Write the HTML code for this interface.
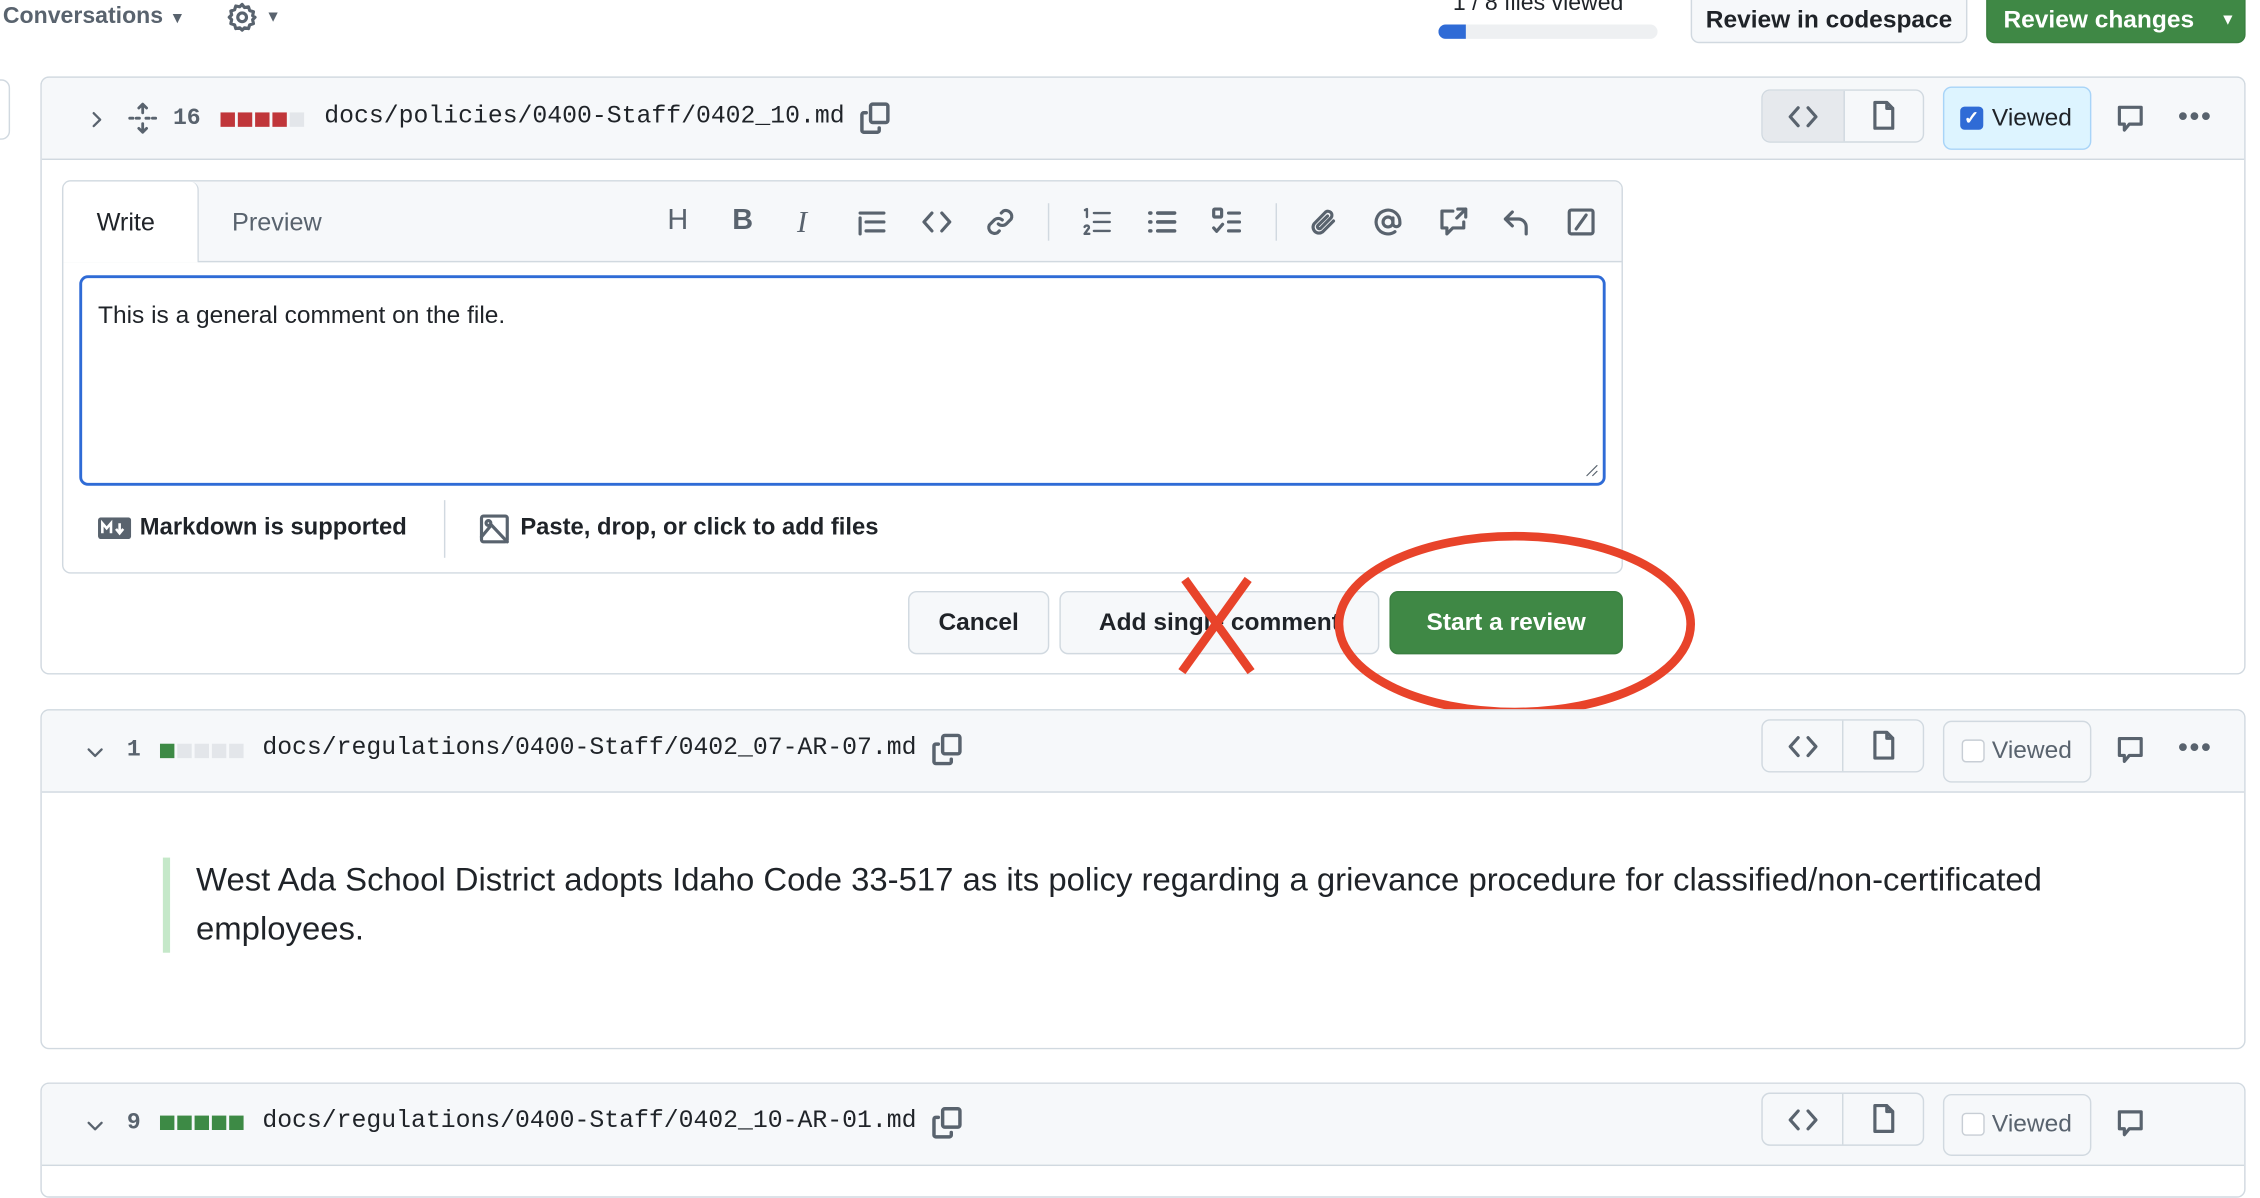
<!DOCTYPE html>
<html><head><meta charset="utf-8">
<style>
html,body{margin:0;padding:0;background:#fff;width:2260px;height:1120px;overflow:hidden}
#s{position:absolute;left:0;top:0;width:1568px;height:777px;transform:scale(1.44133);transform-origin:0 0;font-family:"Liberation Sans",sans-serif;color:#1f2328}
.a{position:absolute}
.mono{font-family:"Liberation Mono",monospace}
.btn{position:absolute;border:1px solid #d1d9e0;border-radius:6px;background:#f6f8fa;box-sizing:border-box;display:flex;align-items:center;justify-content:center;font-size:17px;font-weight:600;color:#1f2328}
.g{background:#3f8845;border-color:#3a7f40;color:#fff}
.box{position:absolute;left:28px;width:1530px;border:1px solid #d1d9e0;border-radius:6px;box-sizing:border-box;background:#fff;overflow:hidden}
.hdr{position:absolute;left:0;top:0;right:0;height:56px;background:#f6f8fa;border-bottom:1px solid #d1d9e0}
svg.i{position:absolute;fill:none;stroke:#59636e;stroke-width:1.6;stroke-linecap:round;stroke-linejoin:round}
.sq{position:absolute;width:10px;height:10px}
</style></head><body><div id="s">

<div class="a" style="left:2px;top:3px;font-size:16px;font-weight:600;color:#59636e">Conversations <span style="font-size:11px">▼</span></div>
<svg class="i" style="left:157px;top:1px" width="22" height="22" viewBox="0 0 16 16"><circle cx="8" cy="8" r="2.2"/><path d="M8 1.5l1.2 1.6 2-.4.6 1.9 1.9.6-.4 2L14.5 8l-1.2 1.2.4 2-1.9.6-.6 1.9-2-.4L8 14.5l-1.2-1.2-2 .4-.6-1.9-1.9-.6.4-2L1.5 8l1.2-1.2-.4-2 1.9-.6.6-1.9 2 .4z"/></svg>
<div class="a" style="left:184px;top:6px;font-size:11px;color:#59636e">▼</div>
<div class="a" style="left:1008px;top:-6px;font-size:16px;color:#1f2328">1 / 8 files viewed</div>
<div class="a" style="left:998px;top:17px;width:152px;height:10px;border-radius:5px;background:#eef0f2;overflow:hidden"><div style="width:19px;height:10px;background:#2f6bd6"></div></div>
<div class="btn" style="left:1173px;top:-8px;width:192px;height:38px;padding-top:6px">Review in codespace</div>
<div class="btn g" style="left:1378px;top:-8px;width:180px;height:38px;padding-top:6px;justify-content:flex-start;padding-left:11px">Review changes<span style="font-size:11px;margin-left:18px">▼</span></div>
<div class="a" style="left:-20px;top:55px;width:25px;height:40px;border:1px solid #d1d9e0;border-radius:6px"></div>

<div class="box" style="top:53px;height:415px">
 <div class="hdr">
  <svg class="i" style="left:30px;top:21px" width="16" height="16" viewBox="0 0 16 16"><path d="M6 3.5L10.5 8 6 12.5"/></svg>
  <svg class="i" style="left:58px;top:16px" width="24" height="24" viewBox="0 0 16 16"><path d="M8 1.5v4M6.2 3.3L8 1.5l1.8 1.8M8 14.5v-4M6.2 12.7L8 14.5l1.8-1.8M2 8h1.5M5 8h1.5M9.5 8H11M12.5 8H14" stroke-width="1.3"/></svg>
  <div class="a mono" style="left:91px;top:19px;font-size:16px;font-weight:700;color:#59636e">16</div>
  <div class="sq" style="left:124px;top:24px;background:#c0363a"></div><div class="sq" style="left:136px;top:24px;background:#c0363a"></div><div class="sq" style="left:148px;top:24px;background:#c0363a"></div><div class="sq" style="left:160px;top:24px;background:#c0363a"></div><div class="sq" style="left:172px;top:24px;background:#e3e6ea"></div>
  <div class="a mono" style="left:196px;top:18px;font-size:17.2px;color:#1f2328">docs/policies/0400-Staff/0402_10.md</div>
  <svg class="i" style="left:566px;top:16px" width="24" height="24" viewBox="0 0 16 16"><rect x="6" y="1.5" width="8" height="8.5" rx="1"/><path d="M4 5.5H2.8a.8.8 0 00-.8.8v7.4c0 .4.4.8.8.8h6.4c.4 0 .8-.4.8-.8V12.5"/></svg>
  <div class="a" style="left:1193px;top:8px;width:113px;height:37px;border:1px solid #d1d9e0;border-radius:6px;box-sizing:border-box;overflow:hidden;background:#f6f8fa"><div style="position:absolute;left:0;top:0;width:56px;height:37px;background:#e6e9ed;border-right:1px solid #d1d9e0"></div></div>
  <svg class="i" style="left:1211px;top:16px" width="22" height="22" viewBox="0 0 16 16"><path d="M5.5 3.5L1.5 8l4 4.5M10.5 3.5l4 4.5-4 4.5"/></svg>
  <svg class="i" style="left:1267px;top:14px" width="22" height="24" viewBox="0 0 16 16"><path d="M3.5 1.5h6l3 3v10h-9z M9.5 1.5v3h3"/></svg>
  <div class="a" style="left:1319px;top:6px;width:103px;height:44px;border:1px solid #a8d4f8;border-radius:6px;box-sizing:border-box;background:#ddf4ff"></div>
  <div class="a" style="left:1331px;top:20px;width:16px;height:16px;border-radius:3px;background:#2f6bd6;color:#fff;font-size:13px;line-height:16px;text-align:center;font-weight:700">✓</div>
  <div class="a" style="left:1353px;top:18px;font-size:17px;color:#1f2328">Viewed</div>
  <svg class="i" style="left:1438px;top:17px" width="22" height="22" viewBox="0 0 16 16"><path d="M2.5 2.5h11v8.5H7.5L5 14v-3H2.5z"/></svg>
  <div class="a" style="left:1482px;top:16px;font-size:20px;color:#59636e;letter-spacing:1px">•••</div>
 </div>

 <div class="a" style="left:14px;top:71px;width:1083px;height:273px;border:1px solid #d1d9e0;border-radius:6px;box-sizing:border-box;overflow:hidden">
  <div class="a" style="left:0;top:0;right:0;height:55px;background:#f6f8fa;border-bottom:1px solid #d1d9e0"></div>
  <div class="a" style="left:0;top:0;width:93px;height:56px;background:#fff;border-right:1px solid #d1d9e0;border-top-right-radius:6px"></div>
  <div class="a" style="left:23px;top:18px;font-size:17.5px;color:#1f2328">Write</div>
  <div class="a" style="left:117px;top:18px;font-size:17.5px;color:#59636e">Preview</div>
  <div class="a" style="left:11px;top:65px;width:1059px;height:146px;border:2px solid #2f6bd6;border-radius:6px;box-sizing:border-box"></div>
  <div class="a" style="left:24px;top:83px;font-size:17px;color:#1f2328">This is a general comment on the file.</div>
  <svg class="i" style="left:1055px;top:195px" width="10" height="10" viewBox="0 0 10 10"><path d="M2 9l7-7M6 9l3-3" stroke-width="0.8"/></svg>
  <svg class="a" style="left:24px;top:233px" width="23" height="15" viewBox="0 0 23 15"><rect width="23" height="15" rx="2" fill="#59636e"/><path d="M3 11V4l3 3.5L9 4v7M15 4v6M12.5 8l2.5 3 2.5-3" stroke="#fff" stroke-width="1.8" fill="none"/></svg>
  <div class="a" style="left:53px;top:231px;font-size:16.5px;font-weight:600;color:#1f2328">Markdown is supported</div>
  <div class="a" style="left:264px;top:221px;width:1px;height:40px;background:#d1d9e0"></div>
  <svg class="i" style="left:288px;top:230px" width="22" height="22" viewBox="0 0 16 16"><rect x="1.5" y="1.5" width="13" height="13" rx="1"/><circle cx="5" cy="5" r="1.2"/><path d="M1.5 12l5-6 8 8.5"/></svg>
  <div class="a" style="left:317px;top:231px;font-size:16.5px;font-weight:600;color:#1f2328">Paste, drop, or click to add files</div>
 </div>
 <div class="a" style="left:434px;top:88px;font-size:20px;color:#59636e">H</div>
 <div class="a" style="left:479px;top:88px;font-size:20px;font-weight:700;color:#59636e">B</div>
 <div class="a" style="left:524px;top:88px;font-size:21px;font-style:italic;color:#59636e;font-family:'Liberation Serif',serif">I</div>
 <svg class="i" style="left:565px;top:89px" width="22" height="22" viewBox="0 0 16 16"><path d="M2 3.5h12M2 6v8M5 8h9M5 12.5h9"/></svg>
 <svg class="i" style="left:610px;top:89px" width="22" height="22" viewBox="0 0 16 16"><path d="M5.5 3.5L1.5 8l4 4.5M10.5 3.5l4 4.5-4 4.5"/></svg>
 <svg class="i" style="left:654px;top:89px" width="22" height="22" viewBox="0 0 16 16"><path d="M7 9a3 3 0 004 0l2.5-2.5a3 3 0 00-4-4L8.5 3.5M9 7a3 3 0 00-4 0L2.5 9.5a3 3 0 004 4l1-1"/></svg>
 <div class="a" style="left:698px;top:87px;width:1px;height:26px;background:#d1d9e0"></div>
 <svg class="i" style="left:721px;top:89px" width="22" height="22" viewBox="0 0 16 16"><path d="M6.5 3.5h8M6.5 8h8M6.5 12.5h8M2 2l1-.5v4M1.8 10.5c.5-1 2.4-1 2.2.5L1.8 14h2.4" stroke-width="1.2"/></svg>
 <svg class="i" style="left:766px;top:89px" width="22" height="22" viewBox="0 0 16 16"><path d="M6 3.5h8.5M6 8h8.5M6 12.5h8.5M2 3.5h.5M2 8h.5M2 12.5h.5" stroke-width="1.8"/></svg>
 <svg class="i" style="left:811px;top:89px" width="22" height="22" viewBox="0 0 16 16"><rect x="1.5" y="1.5" width="4" height="4" rx=".5"/><path d="M9 3.5h5.5M9 8h5.5M9 12.5h5.5M1.5 11l1.5 1.7 3-3.5"/></svg>
 <div class="a" style="left:856px;top:87px;width:1px;height:26px;background:#d1d9e0"></div>
 <svg class="i" style="left:879px;top:89px" width="22" height="22" viewBox="0 0 16 16"><path d="M12.5 7.5L7 13a3 3 0 01-4.2-4.2L8.5 3a2 2 0 012.8 2.8L6 11.2a1 1 0 01-1.4-1.4L9.5 5"/></svg>
 <svg class="i" style="left:923px;top:89px" width="22" height="22" viewBox="0 0 16 16"><circle cx="8" cy="8" r="2.5"/><path d="M10.5 6v3a1.8 1.8 0 003.5 0V8a6 6 0 10-2.5 4.9"/></svg>
 <svg class="i" style="left:968px;top:89px" width="22" height="22" viewBox="0 0 16 16"><path d="M8 2.5H2.5v8.5H5v3l3-3h5.5V8M10.5 1.5h4v4M14.5 1.5L10 6"/></svg>
 <svg class="i" style="left:1012px;top:89px" width="22" height="22" viewBox="0 0 16 16"><path d="M6 3L2.5 6.5 6 10M2.5 6.5h6.5a4 4 0 014 4V14"/></svg>
 <svg class="i" style="left:1057px;top:89px" width="22" height="22" viewBox="0 0 16 16"><rect x="2" y="2" width="12" height="12" rx="1"/><path d="M10.5 4.5l-5 7"/></svg>

 <div class="btn" style="left:601px;top:356px;width:98px;height:44px">Cancel</div>
 <div class="btn" style="left:706px;top:356px;width:222px;height:44px">Add single comment</div>
 <div class="btn g" style="left:935px;top:356px;width:162px;height:44px">Start a review</div>
</div>

<svg class="a" style="left:0;top:0" width="1568" height="777">
 <path d="M822 402L868 466M866 402L820 466" stroke="#e8432a" stroke-width="6" fill="none"/>
 <ellipse cx="1051" cy="433" rx="122" ry="61" stroke="#e8432a" stroke-width="6" fill="none"/>
</svg>

<div class="box" style="top:492px;height:236px">
 <div class="hdr">
  <svg class="i" style="left:29px;top:21px" width="16" height="16" viewBox="0 0 16 16"><path d="M3.5 6L8 10.5 12.5 6"/></svg>
  <div class="a mono" style="left:59px;top:18px;font-size:16px;font-weight:700;color:#59636e">1</div>
  <div class="sq" style="left:82px;top:23px;background:#3d8a45"></div><div class="sq" style="left:94px;top:23px;background:#e3e6ea"></div><div class="sq" style="left:106px;top:23px;background:#e3e6ea"></div><div class="sq" style="left:118px;top:23px;background:#e3e6ea"></div><div class="sq" style="left:130px;top:23px;background:#e3e6ea"></div>
  <div class="a mono" style="left:153px;top:17px;font-size:17.2px;color:#1f2328">docs/regulations/0400-Staff/0402_07-AR-07.md</div>
  <svg class="i" style="left:616px;top:15px" width="24" height="24" viewBox="0 0 16 16"><rect x="6" y="1.5" width="8" height="8.5" rx="1"/><path d="M4 5.5H2.8a.8.8 0 00-.8.8v7.4c0 .4.4.8.8.8h6.4c.4 0 .8-.4.8-.8V12.5"/></svg>
  <div class="a" style="left:1193px;top:6px;width:113px;height:37px;border:1px solid #d1d9e0;border-radius:6px;box-sizing:border-box;background:#f6f8fa"><div style="position:absolute;left:55px;top:0;width:1px;height:35px;background:#d1d9e0"></div></div>
  <svg class="i" style="left:1211px;top:14px" width="22" height="22" viewBox="0 0 16 16"><path d="M5.5 3.5L1.5 8l4 4.5M10.5 3.5l4 4.5-4 4.5"/></svg>
  <svg class="i" style="left:1267px;top:12px" width="22" height="24" viewBox="0 0 16 16"><path d="M3.5 1.5h6l3 3v10h-9z M9.5 1.5v3h3"/></svg>
  <div class="a" style="left:1319px;top:7px;width:103px;height:43px;border:1px solid #d1d9e0;border-radius:6px;box-sizing:border-box;background:#f6f8fa"></div>
  <div class="a" style="left:1332px;top:20px;width:14px;height:14px;border-radius:3px;border:1px solid #c8ced5;background:#fff"></div>
  <div class="a" style="left:1353px;top:18px;font-size:17px;color:#59636e">Viewed</div>
  <svg class="i" style="left:1438px;top:16px" width="22" height="22" viewBox="0 0 16 16"><path d="M2.5 2.5h11v8.5H7.5L5 14v-3H2.5z"/></svg>
  <div class="a" style="left:1482px;top:15px;font-size:20px;color:#59636e;letter-spacing:1px">•••</div>
 </div>
 <div class="a" style="left:84px;top:102px;width:5px;height:66px;background:#c5e8c9"></div>
 <div class="a" style="left:107px;top:100px;font-size:22.8px;line-height:34px;color:#1f2328;width:1300px">West Ada School District adopts Idaho Code 33-517 as its policy regarding a grievance procedure for classified/non-certificated employees.</div>
</div>

<div class="box" style="top:751px;height:80px">
 <div class="hdr">
  <svg class="i" style="left:29px;top:21px" width="16" height="16" viewBox="0 0 16 16"><path d="M3.5 6L8 10.5 12.5 6"/></svg>
  <div class="a mono" style="left:59px;top:18px;font-size:16px;font-weight:700;color:#59636e">9</div>
  <div class="sq" style="left:82px;top:22px;background:#3d8a45"></div><div class="sq" style="left:94px;top:22px;background:#3d8a45"></div><div class="sq" style="left:106px;top:22px;background:#3d8a45"></div><div class="sq" style="left:118px;top:22px;background:#3d8a45"></div><div class="sq" style="left:130px;top:22px;background:#3d8a45"></div>
  <div class="a mono" style="left:153px;top:17px;font-size:17.2px;color:#1f2328">docs/regulations/0400-Staff/0402_10-AR-01.md</div>
  <svg class="i" style="left:616px;top:15px" width="24" height="24" viewBox="0 0 16 16"><rect x="6" y="1.5" width="8" height="8.5" rx="1"/><path d="M4 5.5H2.8a.8.8 0 00-.8.8v7.4c0 .4.4.8.8.8h6.4c.4 0 .8-.4.8-.8V12.5"/></svg>
  <div class="a" style="left:1193px;top:6px;width:113px;height:37px;border:1px solid #d1d9e0;border-radius:6px;box-sizing:border-box;background:#f6f8fa"><div style="position:absolute;left:55px;top:0;width:1px;height:35px;background:#d1d9e0"></div></div>
  <svg class="i" style="left:1211px;top:14px" width="22" height="22" viewBox="0 0 16 16"><path d="M5.5 3.5L1.5 8l4 4.5M10.5 3.5l4 4.5-4 4.5"/></svg>
  <svg class="i" style="left:1267px;top:12px" width="22" height="24" viewBox="0 0 16 16"><path d="M3.5 1.5h6l3 3v10h-9z M9.5 1.5v3h3"/></svg>
  <div class="a" style="left:1319px;top:7px;width:103px;height:43px;border:1px solid #d1d9e0;border-radius:6px;box-sizing:border-box;background:#f6f8fa"></div>
  <div class="a" style="left:1332px;top:20px;width:14px;height:14px;border-radius:3px;border:1px solid #c8ced5;background:#fff"></div>
  <div class="a" style="left:1353px;top:18px;font-size:17px;color:#59636e">Viewed</div>
  <svg class="i" style="left:1438px;top:16px" width="22" height="22" viewBox="0 0 16 16"><path d="M2.5 2.5h11v8.5H7.5L5 14v-3H2.5z"/></svg>
 </div>
</div>

</div></body></html>
